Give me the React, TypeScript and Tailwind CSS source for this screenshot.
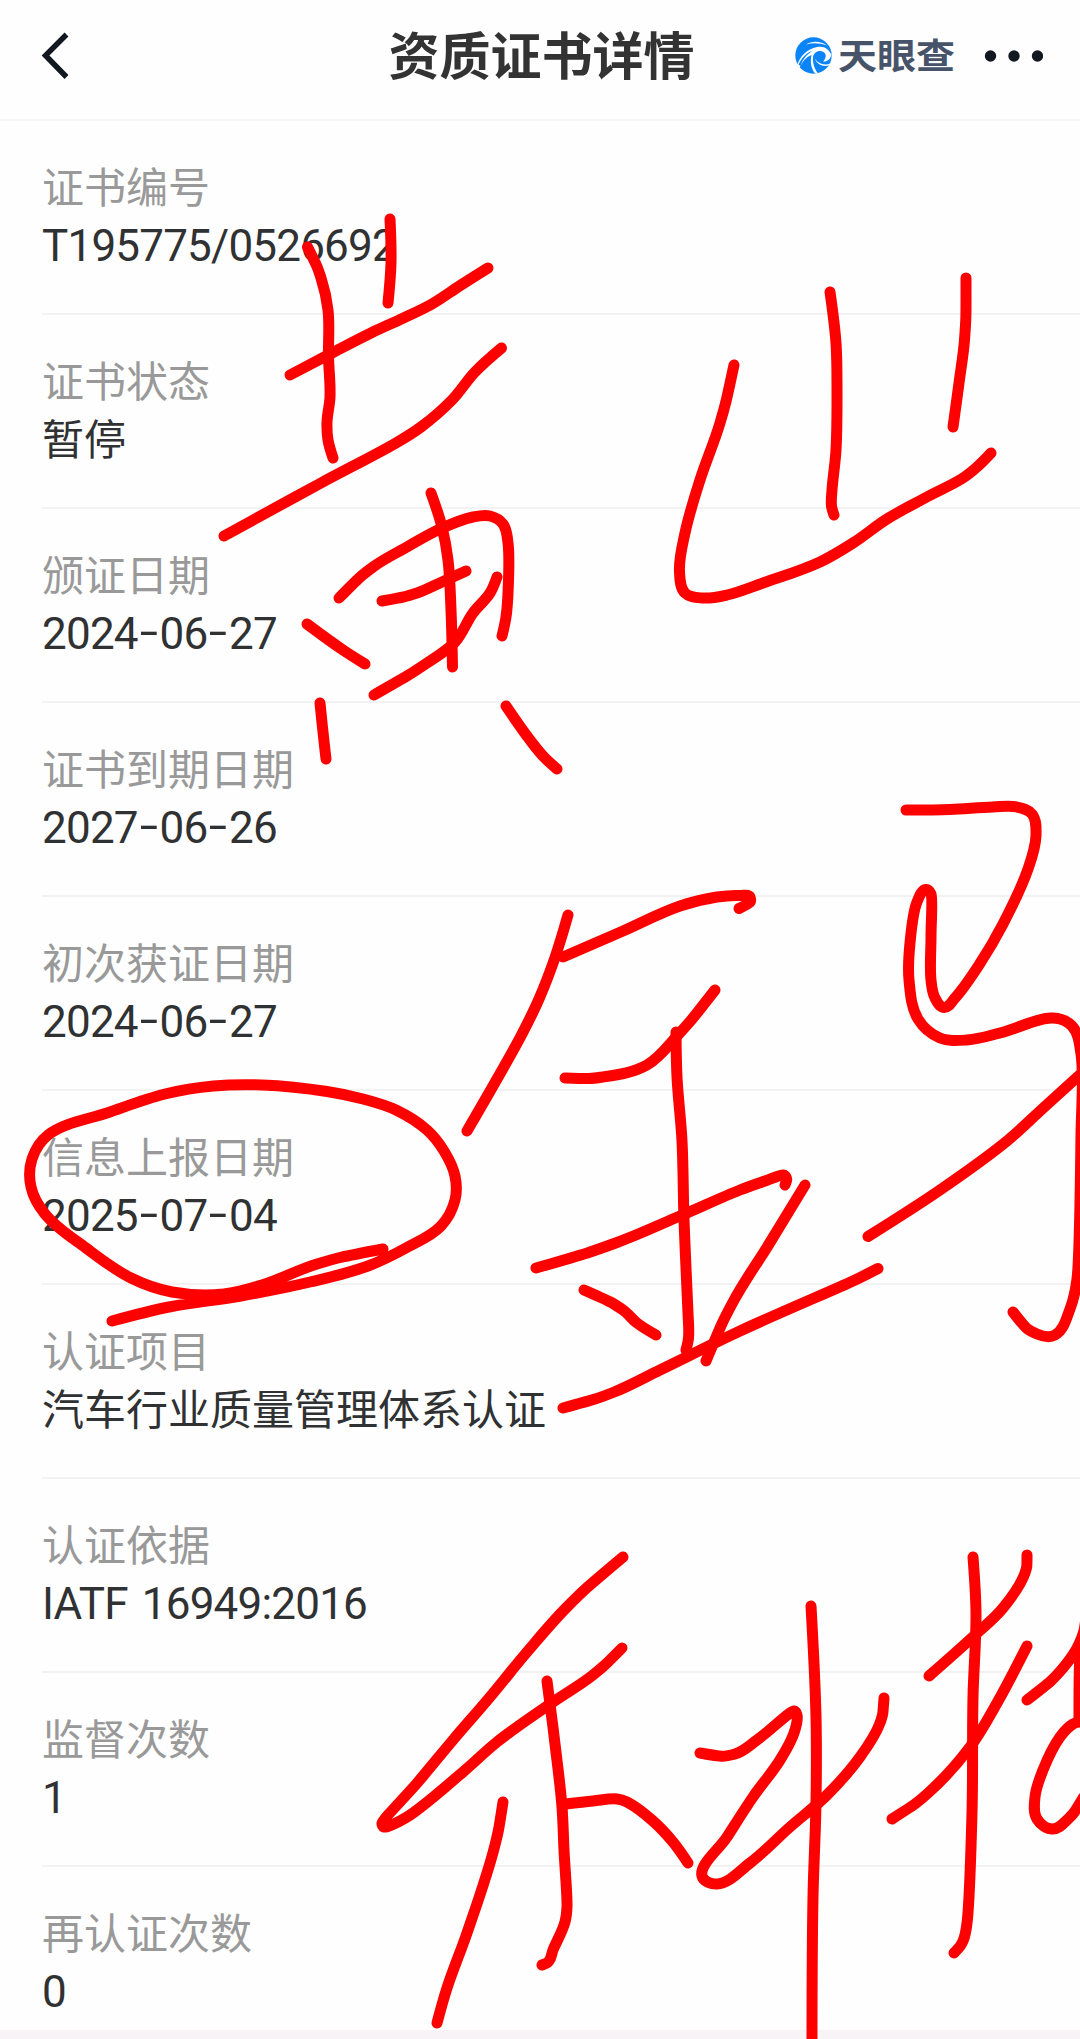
type Point = [number, number];

interface Field {
  label: string;
  value: string;
}

const FIELDS: Field[] = [
  { label: '证书编号', value: 'T195775/0526692' },
  { label: '证书状态', value: '暂停' },
  { label: '颁证日期', value: '2024-06-27' },
  { label: '证书到期日期', value: '2027-06-26' },
  { label: '初次获证日期', value: '2024-06-27' },
  { label: '信息上报日期', value: '2025-07-04' },
  { label: '认证项目', value: '汽车行业质量管理体系认证' },
  { label: '认证依据', value: 'IATF 16949:2016' },
  { label: '监督次数', value: '1' },
  { label: '再认证次数', value: '0' },
];

/** Freehand pen strokes, each one a list of points the pen passed through */
const STROKES: Point[][] = [
  [[390, 219], [391, 263], [388, 303]],
  [[307.5, 247], [321, 278], [328, 310], [328.5, 357], [330, 397], [327, 422], [328, 440], [333, 458]],
  [[290, 375], [332, 353], [371, 333], [403.5, 318], [432, 304], [461, 285], [488, 268]],
  [[224, 536], [321, 483], [396, 443], [421, 427], [452, 400], [475, 372], [501.5, 348]],
  [[431, 493], [442, 527], [448, 560], [451, 610], [452.5, 667]],
  [[339, 598], [373, 567], [407, 547], [440, 529], [473, 517], [490, 516], [503, 524], [508, 543], [508, 593], [506, 617], [502, 636]],
  [[382, 601], [417, 593], [442, 582], [466, 571]],
  [[374, 695], [427, 663], [455, 642], [473, 613], [490, 593], [497, 577]],
  [[307, 624], [343, 650], [365, 664]],
  [[320, 703], [323, 732], [326, 759]],
  [[506, 706], [530, 740], [543, 756], [557, 769]],
  [[734, 365], [720, 423], [700, 480], [685, 533], [679.5, 572], [685, 593], [702, 598], [727, 595], [763, 583], [820, 562], [853, 543], [887, 519], [925, 498], [963, 478], [977, 467], [991, 453]],
  [[830, 292], [836, 343], [837, 390], [836, 450], [832, 490], [831.5, 506], [834, 515]],
  [[966, 278], [964.5, 340], [959, 383], [953, 427]],
  [
    [112, 1321], [169, 1307], [241, 1296], [310, 1282], [368, 1266], [406, 1248], [441, 1226], [455, 1200], [455, 1176], [444, 1151],
    [427, 1130], [396, 1110], [363, 1099], [327, 1091.5], [262, 1085], [213.5, 1086], [165, 1094], [110, 1112], [48, 1135], [32, 1159], [31, 1187],
    [45, 1214], [86, 1248], [131, 1278], [172, 1292], [224, 1294], [262, 1285], [317, 1264], [383, 1249],
  ],
  [[568, 915], [555, 957.5], [539, 999], [522, 1034], [497, 1079], [467, 1131]],
  [[563, 957], [623, 931], [680, 906], [717, 897], [740, 895.5], [750, 897], [739, 908.5]],
  [[565, 1078], [603, 1077], [647, 1065], [677, 1036], [715, 990]],
  [[676, 1032], [677, 1077], [682, 1141], [684, 1220], [688, 1313], [688.5, 1338], [686, 1350]],
  [[536, 1268], [617, 1242.5], [680, 1216], [740, 1190], [765, 1181], [783, 1175], [786, 1177], [785, 1185]],
  [[584, 1290], [623, 1310], [637, 1323], [656, 1335]],
  [[805, 1185], [769, 1244], [733, 1302], [706, 1361]],
  [[563, 1408], [613, 1392.5], [660, 1370], [740, 1331], [853, 1281], [878, 1268.5]],
  [
    [906, 810], [950, 809.5], [993, 807], [1017, 807], [1032, 814], [1036, 835.5], [1028, 869], [1003, 924], [979, 965], [955, 998], [944, 1007.5],
    [935, 998], [931, 980], [931, 937], [931, 894], [926, 889.5], [917, 902], [910, 943], [909, 980], [918, 1019], [940, 1038], [967, 1040],
    [1000, 1033], [1053, 1018], [1072, 1026], [1081, 1054], [1081, 1135], [1077, 1279], [1070, 1309], [1055, 1335], [1037, 1334], [1013, 1312],
  ],
  [[868, 1236.5], [940, 1190], [1007, 1141], [1040, 1111], [1084, 1071]],
  [
    [623, 1557], [567, 1607], [527, 1652], [490, 1697], [453, 1740], [418, 1782], [382, 1823], [384, 1827], [407, 1817], [463, 1772],
    [497, 1742], [553, 1702], [593, 1675], [622, 1648],
  ],
  [[547, 1681], [555, 1744], [562, 1807], [564, 1850], [567, 1907], [565, 1922], [553, 1950], [549, 1961], [542, 1965]],
  [[566, 1804], [593, 1801], [617, 1799], [627, 1802], [653, 1821], [673, 1842], [688, 1863]],
  [[503, 1802], [495, 1845], [467, 1933], [447, 1988], [437, 2023]],
  [
    [700, 1753], [735, 1754], [757, 1740], [794, 1711], [797, 1715], [794, 1733], [780, 1760], [753, 1797], [727, 1837], [702, 1876],
    [717, 1884], [750, 1863], [790, 1827], [827, 1795], [860, 1757], [880, 1723], [884, 1698],
  ],
  [[811, 1606], [816, 1717], [816, 1803], [813, 1897], [812, 2045]],
  [[929, 1676], [975, 1635], [1003, 1608], [1025, 1573], [1027, 1555]],
  [[892, 1819], [927, 1794], [970, 1747], [997, 1703], [1027, 1646]],
  [[973, 1557], [976, 1613], [973, 1697], [972, 1813], [967, 1923], [963, 1941], [954, 1953]],
  [[1027, 1700], [1063, 1668], [1080, 1642], [1087, 1610]],
  [[1081, 1640], [1079.5, 1665], [1079, 1722]],
  [[1083, 1721], [1073, 1724], [1060, 1737], [1043, 1770], [1035, 1797], [1037, 1819], [1053, 1829], [1067, 1820], [1083, 1798]],
];

function distance(a: Point, b: Point): number {
  return Math.hypot(b[0] - a[0], b[1] - a[1]);
}

/** Unit tangent at a point, halfway between the directions of its two segments */
function tangentAt(points: Point[], i: number): Point {
  const p = points[i];
  const a = points[i - 1] ?? p;
  const b = points[i + 1] ?? p;
  const before = distance(a, p) || 1;
  const after = distance(p, b) || 1;
  const x = (p[0] - a[0]) / before + (b[0] - p[0]) / after;
  const y = (p[1] - a[1]) / before + (b[1] - p[1]) / after;
  const length = Math.hypot(x, y) || 1;
  return [x / length, y / length];
}

/** Turns the points of a stroke into a smooth cubic path */
function toPath(points: Point[]): string {
  const last = points.length - 1;
  let d = `M${points[0][0]} ${points[0][1]}`;
  for (let i = 1; i <= last; i++) {
    const [x0, y0] = points[i - 1];
    const [x1, y1] = points[i];
    const own = distance(points[i - 1], points[i]) * 0.34;
    // a short neighbour means a tight bend, so the handle stays short there
    const h0 = i > 1 ? Math.min(own, distance(points[i - 2], points[i - 1]) * 0.7) : own;
    const h1 = i < last ? Math.min(own, distance(points[i], points[i + 1]) * 0.7) : own;
    const t0 = tangentAt(points, i - 1);
    const t1 = tangentAt(points, i);
    const inner0 = [x0 + t0[0] * h0, y0 + t0[1] * h0];
    const inner1 = [x1 - t1[0] * h1, y1 - t1[1] * h1];
    const c1 = i === 1 ? inner1 : inner0;
    const c2 = i === last ? inner0 : inner1;
    d += ` C${c1[0]} ${c1[1]} ${c2[0]} ${c2[1]} ${x1} ${y1}`;
  }
  return d;
}

function BrandMark() {
  return (
    <svg width="37" height="37" viewBox="0 0 37 37" fill="none">
      <circle cx="18.5" cy="18.5" r="18.2" fill="#0a84f8" />
      <path d="M11 7.5C17 3.5 26 4 32 8.500C25 6 18 5.500 11 7.500Z" fill="#fff" />
      <path d="M2 28.500C5 19 12 12 22 10C29 8.500 34 12 36.500 18C35.500 22 32 25 28 24.500C31 22 32 17 28.500 15C24 12.500 19 15 18 20C17.500 26 19.500 32 23 36.500L20.500 36.800C16 32 15 25 16.500 18C11 20 7 25 4.500 31Z" fill="#fff" />
      <path d="M19.500 21C22 26 29 29 35.500 26.500L34.800 28C29 30.500 22 28 19.500 21Z" fill="#fff" />
      <path d="M3.500 27.500C7 20.500 11.500 15.500 18 13.500C12 17 8 22 5.500 29Z" fill="#0a84f8" />
    </svg>
  );
}

function Header() {
  return (
    <header className="grid h-[121px] grid-cols-[1fr_auto_1fr] items-center border-b-2 border-[#f6f6f6] pr-[37px] pb-2 pl-10">
      <svg width="30" height="50" viewBox="0 0 30 50" fill="none" stroke="#111820" strokeWidth="5.5">
        <path d="M26.500 3.500L5.500 24.500L26.500 46" />
      </svg>
      <h1 className="-mt-1.5 text-[51px] leading-[76px] font-bold text-[#333]">资质证书详情</h1>
      <div className="flex items-center justify-end">
        <BrandMark />
        <span className="-mt-1 ml-1.5 scale-y-90 text-[39px] leading-[52px] font-bold text-[#465369]">天眼查</span>
        <svg className="ml-7" width="60" height="12" viewBox="0 0 60 12" fill="#111820">
          <circle cx="7.500" cy="6" r="5.700" />
          <circle cx="31" cy="6" r="5.700" />
          <circle cx="54.500" cy="6" r="5.700" />
        </svg>
      </div>
    </header>
  );
}

function FieldValue({ value }: { value: string }) {
  const isDate = /^\d{4}-\d{2}-\d{2}$/.test(value);
  if (!isDate) return <>{value}</>;

  // hyphens are widened to sit on nearly the same pitch as the digits
  return (
    <>
      {value.split('').map((char, index) =>
        char === '-' ? (
          <span key={index} className="inline-block w-[21.7px] -translate-y-0.5 scale-x-150 text-center tracking-normal">
            -
          </span>
        ) : (
          <span key={index}>{char}</span>
        )
      )}
    </>
  );
}

function FieldRow({ label, value }: Field) {
  const isChinese = /[\u4e00-\u9fff]/.test(value);
  return (
    <div className="h-[194px] border-b-2 border-[#f2f2f3] pt-[35px] last:h-[163px] last:border-0">
      <dt className="text-[42px] leading-[58px] text-[#999]">{label}</dt>
      <dd
        className={
          isChinese
            ? 'text-[42px] leading-[58px] text-[#303132]'
            : "pt-[3px] font-['Roboto','Noto_Sans_CJK_SC',sans-serif] text-[44px] leading-[58px] tracking-[-0.8px] text-[#303132] [word-spacing:4px]"
        }
      >
        <FieldValue value={value} />
      </dd>
    </div>
  );
}

export default function App() {
  return (
    <div className="relative flex h-[2039px] w-[1080px] flex-col overflow-hidden bg-[#fefefe] font-['Noto_Sans_CJK_SC',sans-serif]">
      <Header />
      <dl className="pl-[42px]">
        {FIELDS.map((field) => (
          <FieldRow key={field.label} {...field} />
        ))}
      </dl>
      <div className="flex-1 bg-[#f7f3f7]" />

      <svg
        className="pointer-events-none absolute inset-0"
        width="1080"
        height="2039"
        viewBox="0 0 1080 2039"
        fill="none"
        stroke="#fe0000"
        strokeWidth="11"
        strokeLinecap="round"
        strokeLinejoin="round"
      >
        {STROKES.map((points, index) => (
          <path key={index} d={toPath(points)} />
        ))}
      </svg>
    </div>
  );
}
